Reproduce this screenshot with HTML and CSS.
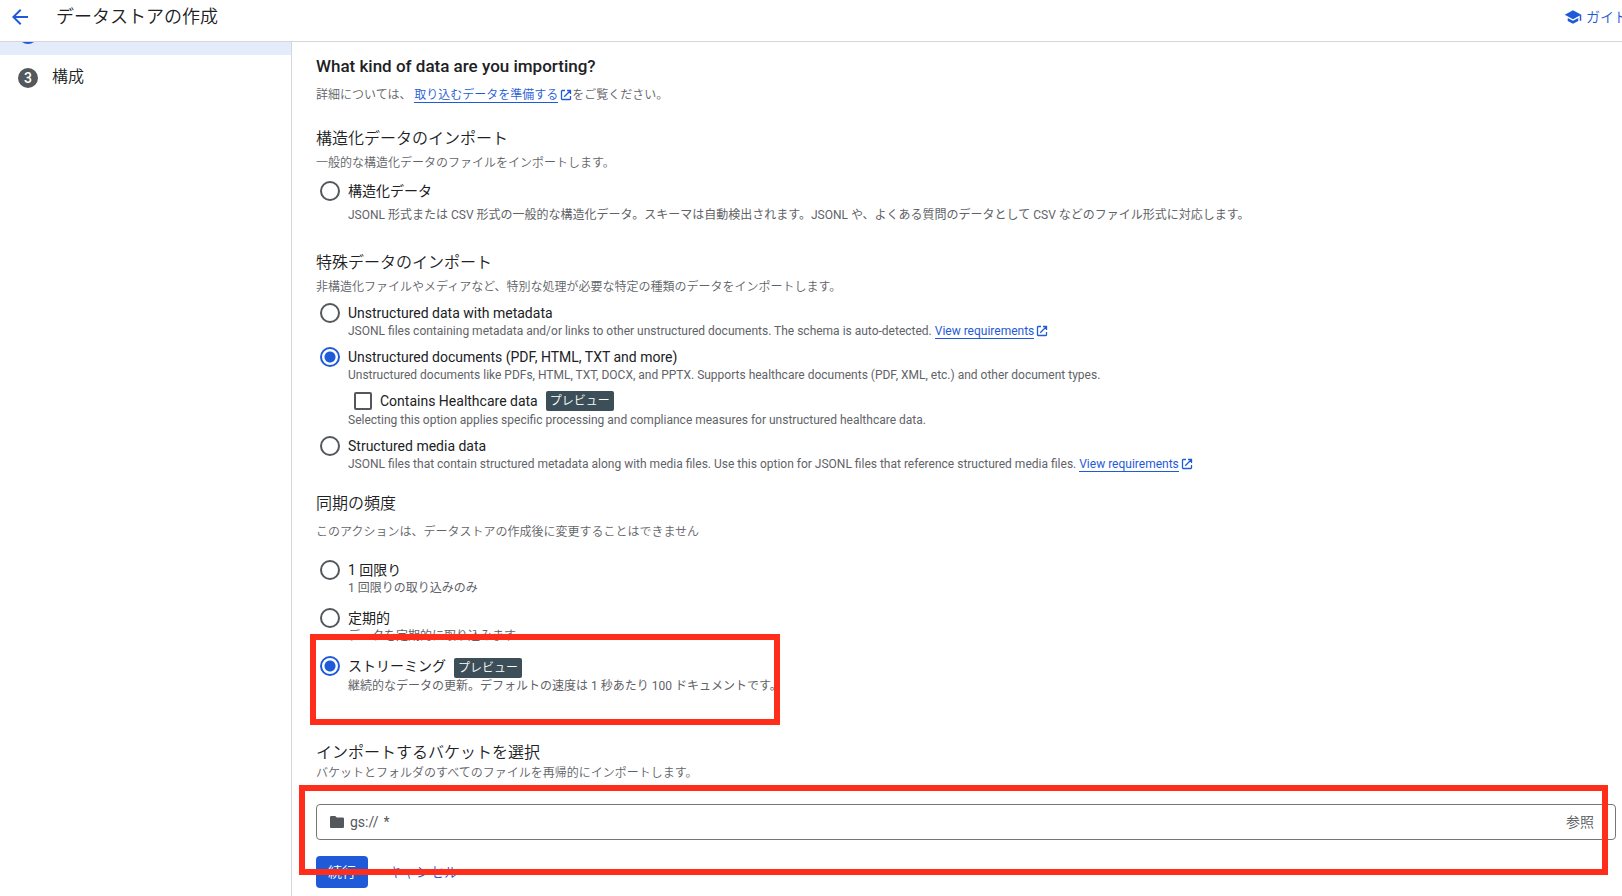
FILE: index.html
```html
<!DOCTYPE html>
<html lang="ja">

<head>
    <meta charset="UTF-8">
    <meta name="viewport" content="width=device-width, initial-scale=1.0">
    <title>データストアの作成</title>
    <link rel="stylesheet" href="styles.css">
</head>

<body>

    <svg class="sprite" aria-hidden="true">
        <symbol id="icon-open" viewBox="0 0 12 12">
            <path d="M5 1.5H2.2a.7.7 0 0 0-.7.7v7.6c0 .4.3.7.7.7h7.6c.4 0 .7-.3.7-.7V7M7 1.5h3.5V5M10.3 1.7 4.2 7.8" fill="none" stroke="currentColor" stroke-width="1.3"/>
        </symbol>
    </svg>

    <!-- Top bar -->
    <header class="topbar">
        <a class="back" href="#" aria-label="戻る">
            <svg width="16" height="16" viewBox="0 0 16 16"><path d="M16 7H3.8l5.6-5.6L8 0 0 8l8 8 1.4-1.4L3.8 9H16z" fill="currentColor"/></svg>
        </a>
        <div class="title">データストアの作成</div>
        <a class="guide" href="#">
            <svg width="18" height="18" viewBox="0 0 24 24"><path d="M5 13.2v4L12 21l7-3.800v-4L12 17zM12 3 1 9l11 6 9-4.900V17h2V9z" fill="currentColor"/></svg>
            ガイド
        </a>
    </header>

    <div class="layout">
        <!-- Steps -->
        <nav class="steps">
            <div class="step active"><span class="number"></span></div>
            <div class="step"><span class="number">3</span><span class="name">構成</span></div>
        </nav>

        <main class="content">
            <h1>What kind of data are you importing?</h1>
            <p class="lead">詳細については、 <a href="#">取り込むデータを準備する</a><svg class="open"><use href="#icon-open"/></svg>をご覧ください。</p>

            <section class="structured">
                <h2>構造化データのインポート</h2>
                <p class="note">一般的な構造化データのファイルをインポートします。</p>
                <div class="option">
                    <label><input type="radio" name="kind"><span class="name">構造化データ</span></label>
                    <p>JSONL 形式または CSV 形式の一般的な構造化データ。スキーマは自動検出されます。JSONL や、よくある質問のデータとして CSV などのファイル形式に対応します。</p>
                </div>
            </section>

            <section class="special">
                <h2>特殊データのインポート</h2>
                <p class="note">非構造化ファイルやメディアなど、特別な処理が必要な特定の種類のデータをインポートします。</p>
                <div class="option">
                    <label><input type="radio" name="kind">Unstructured data with metadata</label>
                    <p>JSONL files containing metadata and/or links to other unstructured documents. The schema is auto-detected. <a href="#">View requirements</a><svg class="open"><use href="#icon-open"/></svg></p>
                </div>
                <div class="option">
                    <label><input type="radio" name="kind" checked>Unstructured documents (PDF, HTML, TXT and more)</label>
                    <p>Unstructured documents like PDFs, HTML, TXT, DOCX, and PPTX. Supports healthcare documents (PDF, XML, etc.) and other document types.</p>
                </div>
                <div class="option nested">
                    <label><input type="checkbox">Contains Healthcare data <span class="badge">プレビュー</span></label>
                    <p>Selecting this option applies specific processing and compliance measures for unstructured healthcare data.</p>
                </div>
                <div class="option">
                    <label><input type="radio" name="kind">Structured media data</label>
                    <p>JSONL files that contain structured metadata along with media files. Use this option for JSONL files that reference structured media files. <a href="#">View requirements</a><svg class="open"><use href="#icon-open"/></svg></p>
                </div>
            </section>

            <section class="sync">
                <h2>同期の頻度</h2>
                <p class="note">このアクションは、データストアの作成後に変更することはできません</p>
                <div class="option">
                    <label><input type="radio" name="sync"><span class="name">1 回限り</span></label>
                    <p>1 回限りの取り込みのみ</p>
                </div>
                <div class="option">
                    <label><input type="radio" name="sync"><span class="name">定期的</span></label>
                    <p>データを定期的に取り込みます</p>
                </div>
                <div class="option streaming">
                    <label><input type="radio" name="sync" checked><span class="name">ストリーミング</span> <span class="badge">プレビュー</span></label>
                    <p>継続的なデータの更新。デフォルトの速度は 1 秒あたり 100 ドキュメントです。</p>
                    <div class="highlight"></div>
                </div>
            </section>

            <section class="bucket">
                <h2>インポートするバケットを選択</h2>
                <p class="note">バケットとフォルダのすべてのファイルを再帰的にインポートします。</p>
                <form class="bucket-form">
                    <div class="field">
                        <svg width="14" height="12" viewBox="0 0 14 12"><path d="M1.300 0h4l1.400 1.500h6c.7 0 1.300.6 1.300 1.300v7.900c0 .7-.6 1.300-1.300 1.300H1.300C.6 12 0 11.400 0 10.700V1.300C0 .6.6 0 1.300 0z" fill="currentColor"/></svg>
                        <label for="path">gs://</label>
                        <input type="text" id="path" value="*">
                        <button type="button">参照</button>
                    </div>
                    <div class="actions">
                        <button type="submit" class="primary">続行</button>
                        <button type="button" class="cancel">キャンセル</button>
                    </div>
                    <div class="highlight"></div>
                </form>
            </section>
        </main>
    </div>

</body>

</html>
```
FILE: styles.css
```css
* {
    margin: 0;
    padding: 0;
    box-sizing: border-box;
}

body {
    display: flex;
    flex-direction: column;
    height: 100vh;
    overflow: hidden;
    font-family: Roboto, "Noto Sans CJK JP", sans-serif;
    font-size: 14px;
    color: #202124;
    background: #fff;
}

a {
    color: #1f5bd8;
    text-decoration: none;
}

button,
input {
    font: inherit;
}

.sprite {
    display: none;
}

/* Top bar */
.topbar {
    display: flex;
    flex: none;
    align-items: center;
    height: 42px;
    padding: 0 0 8px 12px;
    border-bottom: 1px solid #d5d7da;
    overflow: hidden;
}

.back {
    display: flex;
    width: 44px;
}

.title {
    flex: 1;
    font-size: 18px;
    font-weight: 350;
    line-height: 24px;
}

.guide {
    display: flex;
    align-items: center;
    gap: 4px;
    width: 58px;
    font-weight: 350;
    white-space: nowrap;
    line-height: 20px;
}

.guide svg {
    flex: none;
}

.layout {
    display: flex;
    flex: 1;
    min-height: 0;
}

/* Steps */
.steps {
    flex: none;
    width: 292px;
    border-right: 1px solid #d5d7da;
    overflow: hidden;
}

.step {
    display: flex;
    align-items: center;
    gap: 14px;
    height: 46px;
    padding-left: 18px;
    font-size: 16px;
    font-weight: 350;
}

.step .name {
    padding-bottom: 6px;
}

/* scrolled partly under the top bar */
.step.active {
    height: 42px;
    margin-top: -29px;
    background: #e4ebfb;
}

.number {
    width: 20px;
    height: 20px;
    border-radius: 50%;
    background: #54575b;
    color: #fff;
    font-size: 14px;
    font-weight: 500;
    line-height: 20px;
    text-align: center;
}

.active .number {
    background: #1f5bd8;
}

/* Main content */
.content {
    flex: 1;
    min-width: 0;
    padding: 12px 6px 0 24px;
}

h1 {
    font-size: 17px;
    font-weight: 500;
    line-height: 24px;
}

h2 {
    font-size: 16px;
    font-weight: 350;
    line-height: 24px;
}

.lead,
.note,
.option p {
    font-size: 12px;
    line-height: 16px;
    color: #5f6368;
    white-space: nowrap;
}

.lead,
.note {
    font-weight: 350;
}

.lead {
    margin-top: 9px;
}

.note {
    margin-top: 4px;
}

.lead a,
.option p a {
    border-bottom: 1px solid #1f5bd8;
}

.open {
    width: 12px;
    height: 12px;
    margin-left: 2px;
    color: #1f5bd8;
    vertical-align: -2px;
}

.option {
    margin-top: 8px;
    padding-left: 32px;
}

.option label {
    display: flex;
    align-items: center;
    gap: 8px;
    height: 20px;
    margin-left: -28px;
}

.option .name {
    padding-bottom: 2px;
}

.option input {
    appearance: none;
    flex: none;
    width: 20px;
    height: 20px;
    border: 2px solid #54575b;
    border-radius: 50%;
}

.option input:checked {
    border-color: #1f5bd8;
    background: radial-gradient(circle, #1f5bd8 5px, transparent 6px);
}

.option input[type="checkbox"] {
    width: 18px;
    height: 18px;
    border-radius: 2px;
}

.option.nested label {
    gap: 8px;
    margin-left: 6px;
}

.badge {
    height: 20px;
    padding: 0 4px;
    border-radius: 2px;
    background: #3c4f58;
    color: #fff;
    font-size: 12px;
    font-weight: 350;
    line-height: 20px;
}

.structured {
    margin-top: 24px;
}

.structured .option {
    margin-top: 10px;
}

.structured .option p {
    margin-top: 6px;
}

.special {
    margin-top: 28px;
}

.special .option {
    margin-top: 8px;
}

.special .nested p {
    margin-top: 1px;
}

.sync {
    margin-top: 20px;
}

.sync .note {
    margin-top: 8px;
}

.sync .note + .option {
    margin-top: 20px;
}

.sync .option {
    margin-top: 12px;
}

/* Red marker frames */
.highlight {
    position: absolute;
    border: 6px solid #ff2d1a;
    pointer-events: none;
}

.streaming,
.bucket-form {
    position: relative;
}

.streaming .badge {
    margin-top: 3px;
}

.streaming p {
    margin-top: 2px;
}

.streaming .highlight {
    top: -22px;
    left: -6px;
    width: 470px;
    height: 91px;
}

.bucket {
    margin-top: 47px;
}

.bucket .note {
    margin-top: 0;
}

.bucket-form {
    margin-top: 23px;
}

.bucket-form .highlight {
    top: -19px;
    left: -17px;
    right: 8px;
    height: 90px;
}

.field {
    display: flex;
    align-items: center;
    height: 36px;
    padding: 0 21px 0 13px;
    border: 1px solid #747775;
    border-radius: 4px;
    color: #54575b;
}

.field label {
    margin: 0 5px 0 6px;
}

.field input {
    flex: 1;
    min-width: 0;
    border: none;
    outline: none;
    color: inherit;
}

.field button {
    padding-bottom: 2px;
    border: none;
    background: none;
    color: inherit;
    font-weight: 350;
}

.actions {
    display: flex;
    gap: 8px;
    margin-top: 16px;
}

.actions button {
    height: 32px;
    padding: 0 12px 2px;
    border: none;
    border-radius: 4px;
    background: none;
    color: #1f5bd8;
    font-weight: 350;
}

.actions .primary {
    background: #1f5bd8;
    color: #fff;
}
```
